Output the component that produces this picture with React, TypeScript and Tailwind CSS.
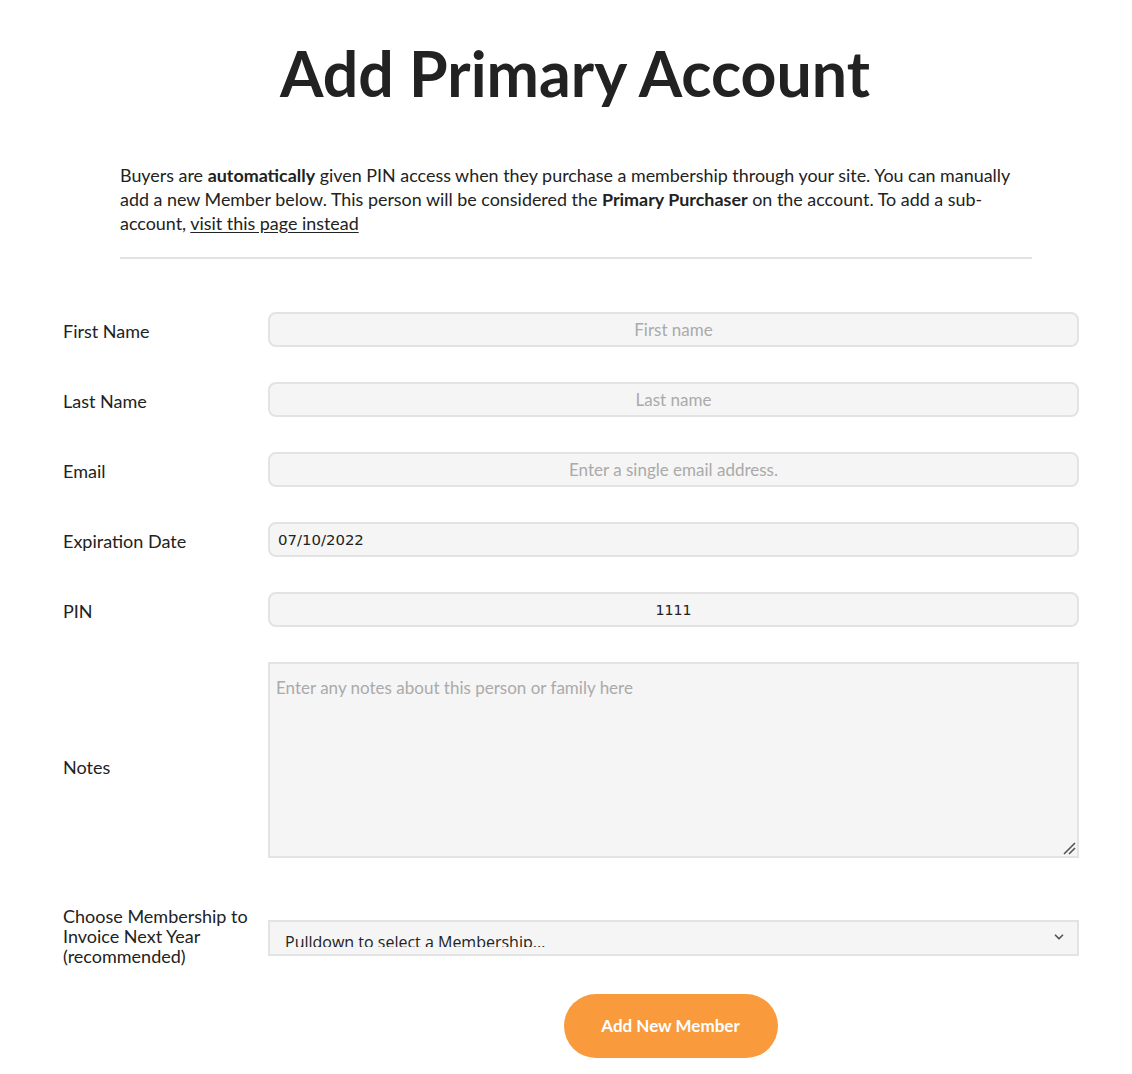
import { ChevronDown } from 'lucide-react';

type Field = {
    label: string;
    placeholder?: string;
    value?: string;
    size?: string;
    align: 'left' | 'center';
};

const fields: Field[] = [
    { label: 'First Name', placeholder: 'First name', align: 'center' },
    { label: 'Last Name', placeholder: 'Last name', align: 'center' },
    { label: 'Email', placeholder: 'Enter a single email address.', align: 'center' },
    { label: 'Expiration Date', value: '07/10/2022', size: 'text-[14.9px]', align: 'left' },
    { label: 'PIN', value: '1111', size: 'text-[14.2px]', align: 'center' },
];

function ResizeGrip() {
    return (
        <svg className="absolute right-[3px] bottom-[3px] w-[14px] h-[14px]" viewBox="0 0 14 14">
            <path d="M2 13 L13 2 M7 13 L13 7" stroke="#555" strokeWidth="1.6" />
        </svg>
    );
}

export default function App() {
    return (
        <div className="min-h-screen bg-white text-[#222] font-['Lato','Liberation_Sans',sans-serif]">
            <div className="w-[1132px] mx-auto pt-[37px] pb-4">
                <h1 className="text-center text-[62.6px] leading-[72px] font-bold text-[#222] ml-[18px]">
                    Add Primary Account
                </h1>

                <div className="ml-[120px] mr-[100px] mt-[54px]">
                    <p className="text-[17.9px] leading-[24px] text-[#222]">
                        Buyers are <strong className="font-bold">automatically</strong> given PIN access when they purchase a
                        membership through your site. You can manually add a new Member below. This person will be considered
                        the <strong className="font-bold">Primary Purchaser</strong> on the account. To add a sub-account,{' '}
                        <a className="underline underline-offset-2">visit this page instead</a>
                    </p>
                    <div className="mt-[22px] h-[2px] bg-[#e2e2e2]" />
                </div>

                <form className="ml-[63px] mr-[53px] mt-[53px] flex flex-col">
                    {fields.map((f) => (
                        <div key={f.label} className="flex items-center h-[35px] mb-[35px]">
                            <label className="w-[205px] shrink-0 text-[18px] text-[#222] pt-[3px]">{f.label}</label>
                            <input
                                readOnly
                                defaultValue={f.value}
                                placeholder={f.placeholder}
                                className={`flex-1 h-[35px] rounded-[8px] border-2 border-[#e3e3e3] bg-[#f5f5f5] px-2 text-[#222] placeholder:text-[#aaa] outline-none ${
                                    f.align === 'center' ? 'text-center' : 'text-left'
                                } ${f.size ? `font-['DejaVu_Sans',sans-serif] ${f.size}` : 'text-[17px]'}`}
                            />
                        </div>
                    ))}

                    <div className="flex items-center h-[196px]">
                        <label className="w-[205px] shrink-0 text-[18px] text-[#222] pt-[14px]">Notes</label>
                        <div className="relative flex-1 h-[196px]">
                            <textarea
                                readOnly
                                placeholder="Enter any notes about this person or family here"
                                className="w-full h-full resize-none border-2 border-[#e3e3e3] bg-[#f5f5f5] px-[6px] py-[12px] text-[17px] leading-[24px] placeholder:text-[#aaa] outline-none"
                            />
                            <ResizeGrip />
                        </div>
                    </div>

                    <div className="flex items-center mt-[50px] h-[60px]">
                        <label className="w-[205px] shrink-0 text-[18px] leading-[20px] text-[#222] pr-4 -mt-[4px]">
                            Choose Membership to Invoice Next Year (recommended)
                        </label>
                        <div className="flex-1 h-[36px] border-2 border-[#e3e3e3] bg-[#f5f5f5] relative">
                            <div className="h-[25px] overflow-hidden">
                                <span className="block pl-[15px] pt-[8px] text-[16px] leading-[24px] text-[#222] font-['Open_Sans',sans-serif]">
                                    Pulldown to select a Membership...
                                </span>
                            </div>
                            <ChevronDown className="absolute right-[11px] top-[8px] w-[14px] h-[14px] text-[#555]" strokeWidth={3} />
                        </div>
                    </div>

                    <div className="flex mt-[26px]">
                        <div className="w-[205px] shrink-0" />
                        <div className="flex-1 flex justify-center pr-[6px]">
                            <button
                                type="button"
                                className="w-[214px] h-[64px] rounded-full bg-[#f99a3d] text-white text-[17px] font-bold"
                            >
                                Add New Member
                            </button>
                        </div>
                    </div>
                </form>
            </div>
        </div>
    );
}
